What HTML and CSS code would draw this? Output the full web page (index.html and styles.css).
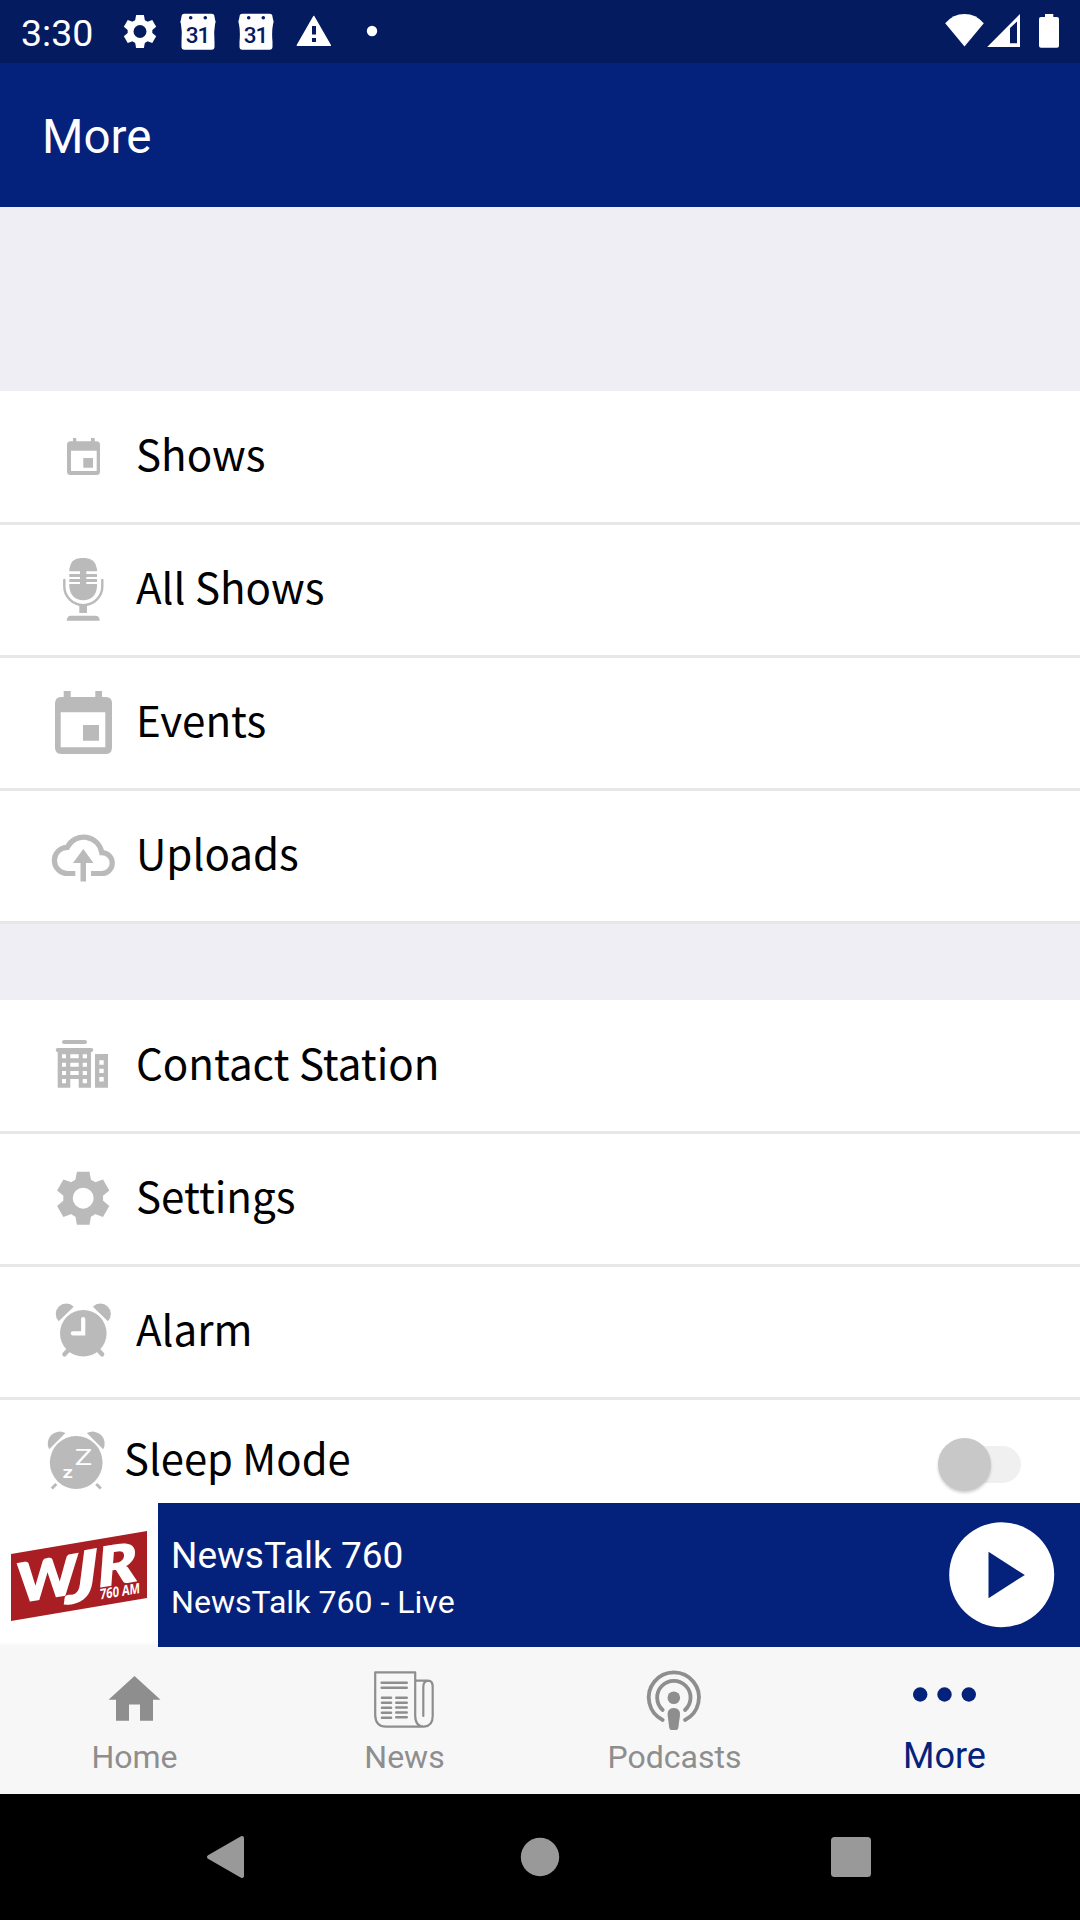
FILE: index.html
```html
<!DOCTYPE html>
<html lang="en">
<head>
<meta charset="utf-8">
<title>More</title>
<link rel="stylesheet" href="styles.css">
</head>
<body>
<svg class="defs" aria-hidden="true">
  <defs>
    <path id="tooth" d="M-6.3-26.5H6.3L8.2-16H-8.2Z"/>
    <g id="gear">
      <circle r="15.2" fill="none" stroke="currentColor" stroke-width="9.5"/>
      <use href="#tooth"/>
      <use href="#tooth" transform="rotate(60)"/>
      <use href="#tooth" transform="rotate(120)"/>
      <use href="#tooth" transform="rotate(180)"/>
      <use href="#tooth" transform="rotate(240)"/>
      <use href="#tooth" transform="rotate(300)"/>
    </g>
    <path id="day" d="M4 0H31Q34 0 34 3L34.600 6Q35.600 8 34.600 10Q33 18 34 28V33Q34 36 31 36H4Q1 36 1 33V28Q2 18 .4 10Q-.6 8 .4 6L1 3Q1 0 4 0Z"/>
  </defs>
</svg>
<div class="screen">
  <header class="status">
    <span class="clock">3:30</span>
    <svg class="notices" width="270" height="63" viewBox="110 0 270 63">
      <use href="#gear" transform="translate(140 31.500) scale(.62)"/>
      <g>
        <use href="#day" x="180.500" y="13.700"/>
        <circle cx="190.700" cy="17.800" r="1.800" class="ink"/><circle cx="205.300" cy="17.800" r="1.800" class="ink"/>
        <text x="197.500" y="42.500" class="date">31</text>
      </g>
      <g>
        <use href="#day" x="238.500" y="13.700"/>
        <circle cx="248.700" cy="17.800" r="1.800" class="ink"/><circle cx="263.300" cy="17.800" r="1.800" class="ink"/>
        <text x="255.500" y="42.500" class="date">31</text>
      </g>
      <path d="M313.800 16.500 330.300 45.300H297.300Z" stroke="currentColor" stroke-width="1.500" stroke-linejoin="round"/>
      <path class="ink" d="M312 26h4v8.500h-4zM312 38h4v4h-4z"/>
      <circle cx="372" cy="31" r="5.200"/>
    </svg>
    <svg class="signals" width="130" height="63" viewBox="940 0 130 63">
      <path d="M945.200 23.300Q953 14 964.500 14T983.800 23.300L964.500 46.500Z"/>
      <path fill-rule="evenodd" d="M987.200 47 1020 14V47ZM1010 28V43.300H1017V21.500Z"/>
      <path d="M1045 14h8.300v3h3.700q2 0 2 2v26.700q0 2-2 2h-16q-2 0-2-2V19q0-2 2-2h4Z"/>
    </svg>
  </header>
  <div class="appbar"><h1>More</h1></div>

  <main>
    <ul class="menu menu-first">
      <li class="row">
        <svg class="icon" viewBox="36 391 100 131">
          <path fill-rule="evenodd" d="M73 438h3.300v3.300H91V438h3.700v3.300H96.500q3.500 0 3.500 3.500V471.500q0 3.500-3.500 3.500H70.500Q67 475 67 471.500V444.800q0-3.500 3.500-3.500H73ZM71 450.700V471H96.700V450.700ZM83.300 458H93v9.700H83.300Z"/>
        </svg>
        <span>Shows</span>
      </li>
      <li class="row">
        <svg class="icon" viewBox="36 525 100 130">
          <path d="M69.300 571.300V569Q71 558 81 558H85.500Q95.500 558.500 97 569V571.300H86.300V574H97V577H86.300V579H97V582H86.300V584H97V587Q95.500 600 83.200 600.300Q71 600 69.300 587V584H80V582H69.300V579H80V577H69.300V574H80V571.300Z"/>
          <path d="M64.300 580V586.500A18.900 18.500 0 0 0 102.300 586.500V580" fill="none" stroke="currentColor" stroke-width="2.400" stroke-linecap="round"/>
          <path d="M79.300 605H87V613H79.300ZM66.700 620.800Q67 615.700 71 615.700H95.500Q99.500 615.700 99.700 620.800Z"/>
        </svg>
        <span>All Shows</span>
      </li>
      <li class="row">
        <svg class="icon" viewBox="36 658 100 130">
          <path fill-rule="evenodd" d="M63.700 691h7v6H95.300V691h6.700v6H106q6 .5 6 6V748q-.5 6-6 6H61q-6-.5-6-6V703q.5-6 6-6H63.700ZM60.700 712.300V747.300H105.300V712.300ZM83 725H99V740.700H83Z"/>
        </svg>
        <span>Events</span>
      </li>
      <li class="row">
        <svg class="icon" viewBox="36 791 100 130">
          <path d="M75.300 873.500H67.700A13 13 0 0 1 67.300 847.300A18.300 18.300 0 0 1 101.800 852.700A10.400 10.400 0 0 1 102 873.500H91" fill="none" stroke="currentColor" stroke-width="5.200"/>
          <path d="M83.300 849 93.500 863H86V881.500H80.500V863H73Z"/>
        </svg>
        <span>Uploads</span>
      </li>
    </ul>

    <ul class="menu">
      <li class="row">
        <svg class="icon" viewBox="36 1000 100 131">
          <rect x="62" y="1040" width="25" height="4" rx="2"/>
          <rect x="55.700" y="1048" width="37.600" height="4" rx="2"/>
          <path fill-rule="evenodd" d="M57.700 1050H91V1087.700H78.700V1079H70.300V1087.700H57.700ZM62 1054.300h4v4h-4zM70.300 1054.300h8.400v4h-8.400zM82.700 1054.300h4.300v4h-4.300zM62 1062.700h4v4h-4zM70.300 1062.700h8.400v4h-8.400zM82.700 1062.700h4.300v4h-4.300zM62 1071h4v4h-4zM70.300 1071h8.400v4h-8.400zM82.700 1071h4.300v4h-4.300zM62 1079h4v4.300h-4zM82.700 1079h4.300v4.300h-4.300zM95 1054H108V1087.700H95ZM99.300 1060.300h4.400v4.400h-4.400zM99.300 1068.700h4.400v4.400h-4.400zM99.300 1077h4.400v4.400h-4.400z"/>
        </svg>
        <span>Contact Station</span>
      </li>
      <li class="row">
        <svg class="icon" viewBox="36 1134 100 130"><use href="#gear" transform="translate(83.200 1198.200)"/></svg>
        <span>Settings</span>
      </li>
      <li class="row">
        <svg class="icon" viewBox="36 1267 100 130">
          <circle cx="83.300" cy="1333.300" r="23.300"/>
          <path d="M73.700 1306.700A10.400 10.400 0 0 0 58.700 1321.300ZM92.900 1306.700A10.400 10.400 0 0 1 107.900 1321.300Z"/>
          <path d="M69.500 1349 64.500 1354.300M97.100 1349 102.100 1354.300" stroke="currentColor" stroke-width="4.500" stroke-linecap="round"/>
          <path d="M83.200 1319V1333.300H72.800" fill="none" stroke="#fff" stroke-width="4.200" stroke-linecap="round"/>
        </svg>
        <span>Alarm</span>
      </li>
      <li class="row row-sleep">
        <svg class="icon" viewBox="36 1400 88 103">
          <circle cx="76.200" cy="1462.500" r="26.400"/>
          <path d="M65.500 1433A12 12 0 0 0 49.200 1449.300ZM86.900 1433A12 12 0 0 1 103.200 1449.300Z"/>
          <path d="M56.300 1484 51.800 1488.500M96.300 1484 100.800 1488.500" stroke="currentColor" stroke-width="3"/>
          <text class="snore" x="74.800" y="1465" textLength="17.500" lengthAdjust="spacingAndGlyphs">Z</text>
          <text class="snore snore-small" x="62.700" y="1477.500" textLength="10" lengthAdjust="spacingAndGlyphs">Z</text>
        </svg>
        <span>Sleep Mode</span>
        <div class="switch"><i></i></div>
      </li>
    </ul>
  </main>

  <section class="player">
    <svg class="cover" width="158" height="144" viewBox="0 1503 158 144">
      <path fill="#a91e23" d="M11 1554 147 1531V1598L11 1621Z"/>
      <g fill="#fff" class="brand">
        <text transform="translate(20 1602.500) skewY(-9.500) skewX(8)" font-size="54" textLength="60" lengthAdjust="spacingAndGlyphs">W</text>
        <text transform="translate(66 1604) skewY(-9.500)" font-size="69" textLength="31" lengthAdjust="spacingAndGlyphs">J</text>
        <text transform="translate(99 1587) skewY(-9.500) skewX(4)" font-size="54" textLength="39" lengthAdjust="spacingAndGlyphs">R</text>
        <text transform="translate(100 1599.500) skewY(-9)" class="freq" textLength="40" lengthAdjust="spacingAndGlyphs">760 AM</text>
      </g>
    </svg>
    <div class="track">
      <p class="title">NewsTalk 760</p>
      <p class="subtitle">NewsTalk 760 - Live</p>
    </div>
    <svg class="play" width="106" height="106" viewBox="948.500 1521.500 106 106">
      <circle cx="1001.200" cy="1574.200" r="52.500" fill="#fff"/>
      <path class="play-mark" d="M988 1551.300 1024.300 1574.500 988 1597.700Z"/>
    </svg>
  </section>

  <nav class="tabs">
    <a class="tab">
      <svg viewBox="95 1660 80 75"><path d="M134.500 1676 160.500 1699.700H153V1720.700H140V1704.500H129V1720.700H116V1699.700H108.500Z"/></svg>
      <span>Home</span>
    </a>
    <a class="tab">
      <svg viewBox="365 1660 80 75">
        <g fill="none" stroke="currentColor" stroke-width="2.200" stroke-linejoin="round" stroke-linecap="round">
          <path d="M375.200 1672.300H415.200V1716Q415.500 1726.700 424 1726.700Q432.700 1726 432.700 1716V1687Q432.700 1680.700 428 1680.700H416M375.200 1672.300V1715Q375.500 1726.700 386 1726.700H424M423.300 1716V1687Q423.300 1681 428 1681"/>
          <path stroke-width="2.600" d="M381.700 1682.700H406.700M381.700 1687.700H406.700M382 1697.700H391M396.300 1697.700H406.700M382 1702.700H391M396.300 1702.700H406.700M382 1707.700H391M396.300 1707.500H406.700M382 1712.700H391M396.300 1712.500H406.700M382 1717.700H391M396.300 1717.300H406.700"/>
        </g>
      </svg>
      <span>News</span>
    </a>
    <a class="tab">
      <svg viewBox="635 1660 80 75">
        <g fill="none" stroke="currentColor" stroke-width="3.800" stroke-linecap="round">
          <path d="M662.700 1720A25.100 25.100 0 1 1 685 1720"/>
          <path d="M662.700 1710A16.700 16.700 0 1 1 685 1710"/>
        </g>
        <circle cx="673.800" cy="1697.700" r="6.300"/>
        <path d="M673.800 1708Q680.500 1708.300 680 1715L678.300 1728Q678 1730 676 1730H671.500Q669.600 1730 669.300 1728L667.600 1715Q667 1708.300 673.800 1708Z"/>
      </svg>
      <span>Podcasts</span>
    </a>
    <a class="tab active">
      <svg viewBox="905 1660 80 75"><circle cx="920.200" cy="1694.500" r="7.200"/><circle cx="944.500" cy="1694.500" r="7.200"/><circle cx="968.800" cy="1694.500" r="7.200"/></svg>
      <span>More</span>
    </a>
  </nav>

  <footer class="system">
    <svg viewBox="200 1794 50 126"><path d="M242 1838 209 1857 242 1876Z" stroke="currentColor" stroke-width="4" stroke-linejoin="round"/></svg>
    <svg viewBox="515 1794 50 126"><circle cx="542" cy="1857" r="19.200"/></svg>
    <svg viewBox="826 1794 50 126"><rect x="831" y="1837" width="40" height="40" rx="3.500"/></svg>
  </footer>
</div>
</body>
</html>
```
FILE: styles.css
```css
* { box-sizing: border-box; margin: 0; padding: 0; }
body { background: #efeef4; font-family: Roboto, sans-serif; }
svg { display: block; fill: currentColor; flex: none; }
ul { list-style: none; }
.defs { position: absolute; width: 0; height: 0; }

.screen {
  width: 1080px;
  height: 1920px;
  display: flex;
  flex-direction: column;
  overflow: hidden;
}

.status {
  height: 63px;
  flex: none;
  display: flex;
  align-items: center;
  background: #041b5f;
  color: #fff;
}
.clock { width: 110px; padding: 2px 0 0 21px; font-size: 37.5px; line-height: 44px; }
.signals { margin-left: auto; margin-right: 10px; }
.ink { fill: #041b5f; }
.date { fill: #041b5f; font-size: 22.5px; font-weight: 500; text-anchor: middle; letter-spacing: -1px; }

.appbar {
  height: 144px;
  flex: none;
  display: flex;
  align-items: center;
  padding: 3px 0 0 42px;
  background: #04217b;
  color: #fff;
}
.appbar h1 { font-size: 47.5px; font-weight: 400; line-height: 56px; }

main { flex: 1; min-height: 0; overflow: hidden; padding-top: 184px; }
.menu { background: #fff; }
.menu-first { margin-bottom: 76px; }
.row {
  height: 133px;
  display: flex;
  align-items: flex-start;
  padding-left: 36px;
  border-bottom: 3px solid #e7e7e7;
  font: 42.1px/60px "Noto Sans CJK JP", sans-serif;
  color: #000;
}
.row:first-child { height: 134px; }
.row span { padding-top: 31px; }
.row:first-child span { padding-top: 32px; }
.icon { width: 100px; height: 130px; color: #bababa; }
.row:first-child .icon { height: 131px; }
.row-sleep { height: 103px; border: 0; }
.row-sleep .icon { width: 88px; height: 103px; }
.row-sleep span { padding-top: 27px; font-size: 41.8px; }
.snore { fill: #fff; font: 22px "DejaVu Sans", sans-serif; }
.snore-small { font-size: 13px; font-weight: 700; }
.switch {
  width: 67px;
  height: 37px;
  margin: 46px 59px 0 auto;
  border-radius: 19px;
  background: #f0f0f0;
}
.switch i {
  display: block;
  width: 53px;
  height: 53px;
  margin: -8px 0 0 -16px;
  border-radius: 50%;
  background: #c8c8c8;
  box-shadow: 0 2px 3px rgba(0, 0, 0, .18);
}

.player { height: 144px; flex: none; display: flex; align-items: center; background: #04217b; color: #fff; }
.cover { background: linear-gradient(#fff 139px, #f7f7f7 143px); }
.brand { font-family: Lato, sans-serif; font-weight: 900; font-style: italic; stroke: #fff; stroke-width: 1.5px; }
.freq { font-family: "Open Sans", sans-serif; font-size: 14.5px; font-weight: 700; font-style: normal; stroke: none; }
.track { flex: 1; padding: 4px 0 0 13px; }
.title { font-size: 37px; line-height: 49px; }
.subtitle { font-size: 32.1px; line-height: 44px; }
.play { margin-right: 25px; }
.play-mark { fill: #04217b; }

.tabs { height: 147px; flex: none; display: flex; background: #f7f7f7; }
.tab {
  flex: 1;
  display: flex;
  flex-direction: column;
  align-items: center;
  padding-top: 13px;
  color: #8e8e8e;
  font-size: 32px;
  line-height: 40px;
}
.tab svg { width: 80px; height: 75px; }
.tab span { padding: 2px 1px 0 0; }
.active { color: #04217b; font-size: 36px; }
.active span { padding-top: 1px; }

.system {
  height: 126px;
  flex: none;
  display: flex;
  justify-content: space-between;
  padding: 0 204px 0 200px;
  background: #000;
  color: #999;
}
.system svg { width: 50px; height: 126px; }
```
